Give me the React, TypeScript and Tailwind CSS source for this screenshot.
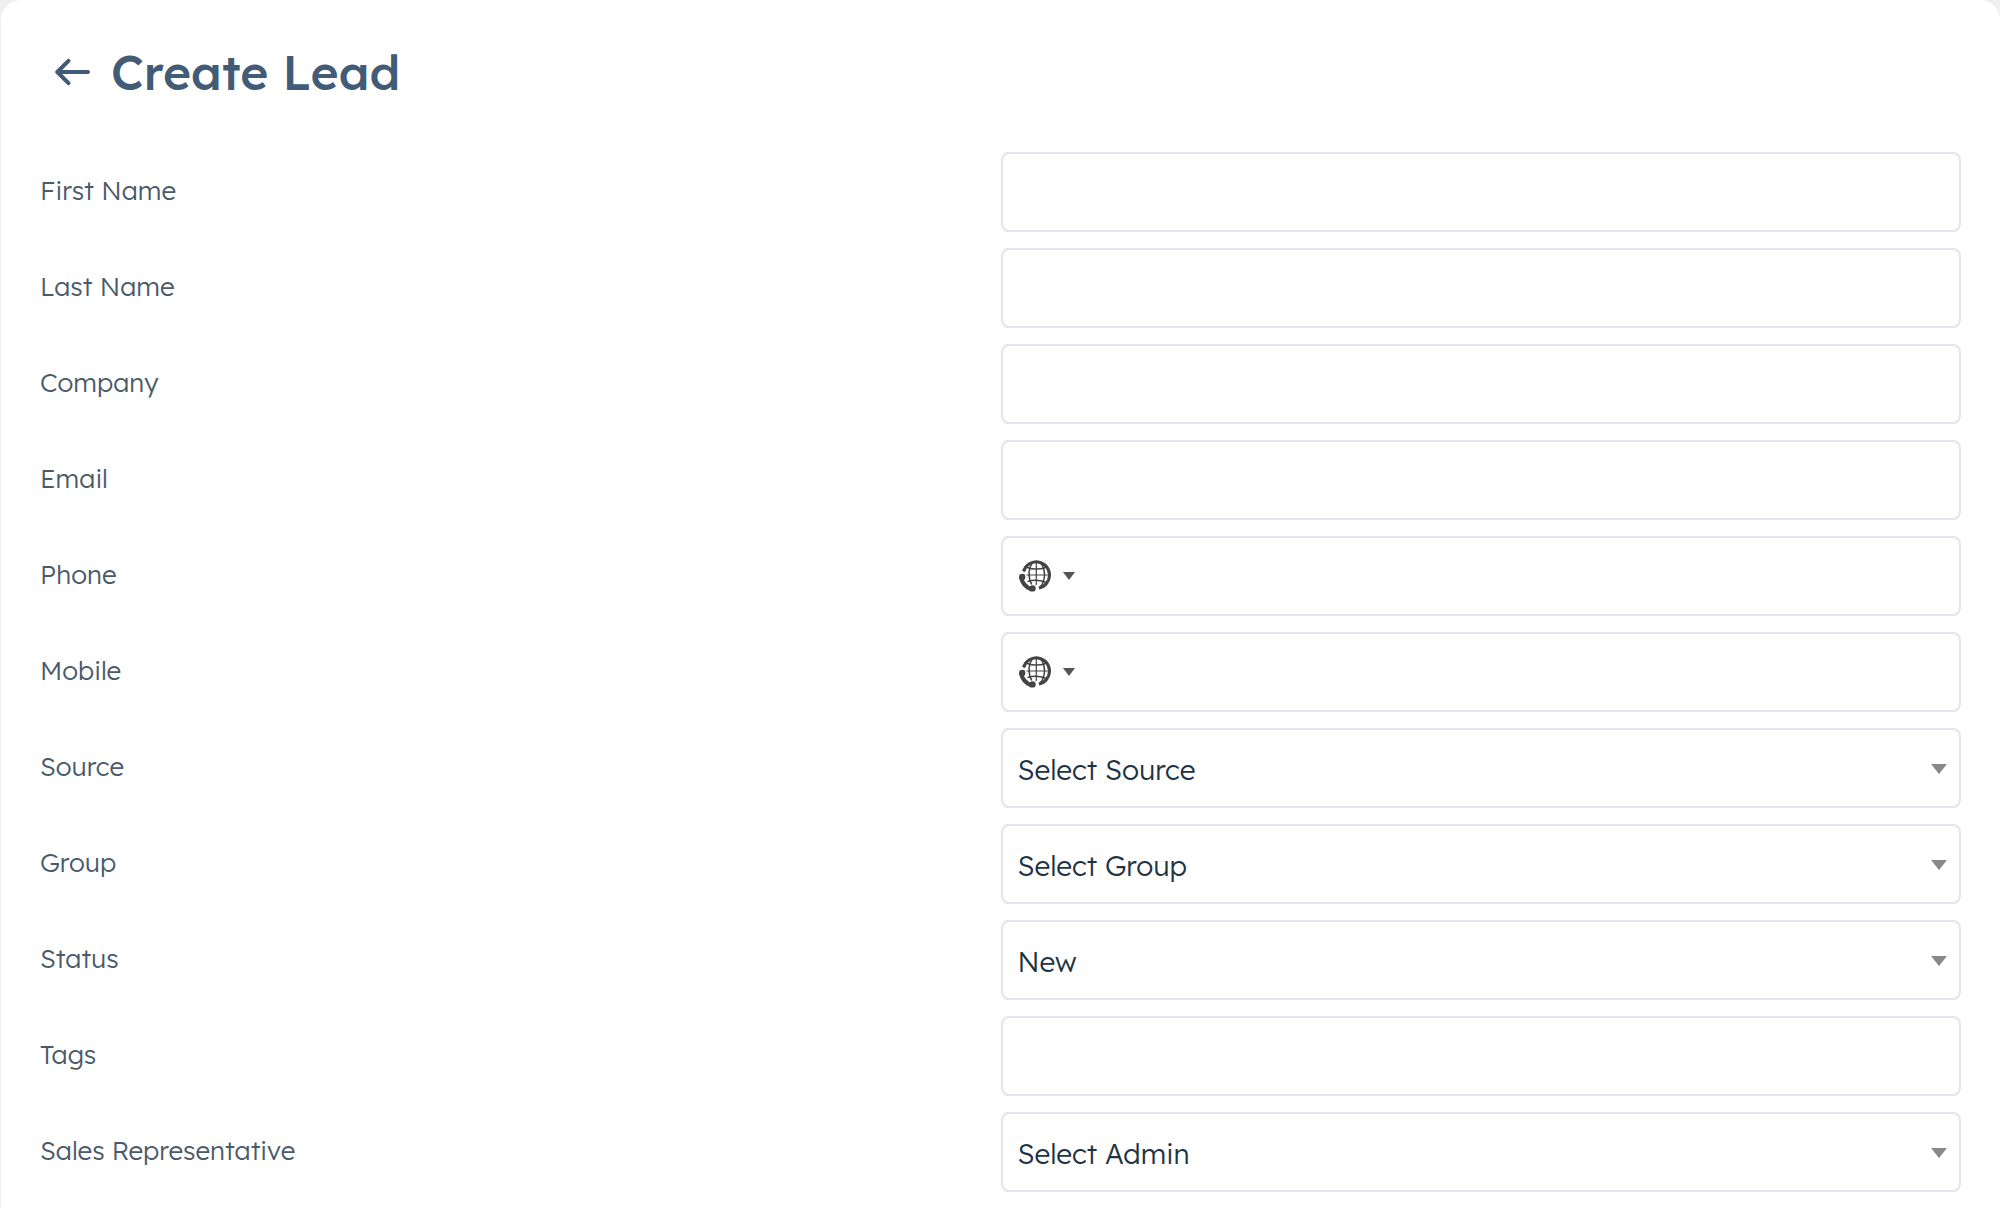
import type { ReactNode } from "react";

type FieldType = "text" | "email" | "phone" | "select";

interface Field {
  id: string;
  label: string;
  type: FieldType;
  options?: string[];
}

const fields: Field[] = [
  { id: "first-name", label: "First Name", type: "text" },
  { id: "last-name", label: "Last Name", type: "text" },
  { id: "company", label: "Company", type: "text" },
  { id: "email", label: "Email", type: "email" },
  { id: "phone", label: "Phone", type: "phone" },
  { id: "mobile", label: "Mobile", type: "phone" },
  { id: "source", label: "Source", type: "select", options: ["Select Source"] },
  { id: "group", label: "Group", type: "select", options: ["Select Group"] },
  { id: "status", label: "Status", type: "select", options: ["New"] },
  { id: "tags", label: "Tags", type: "text" },
  { id: "sales-rep", label: "Sales Representative", type: "select", options: ["Select Admin"] },
];

const boxClass = "h-20 w-full rounded-lg border-2 border-[#e1e5f1] bg-white text-[28px] text-[#213343]";

const BackArrow = () => (
  <svg width="36" height="28" viewBox="0 0 36 28" fill="none" stroke="currentColor" strokeWidth="4" strokeLinecap="round" strokeLinejoin="round" aria-hidden="true">
    <path d="M33 14H2.5M13.5 2.8L2.3 14l11.2 11.2" />
  </svg>
);

const GlobePhone = () => (
  <svg width="33" height="32" viewBox="0 0 33 32" fill="none" stroke="#444" aria-hidden="true">
    {/* outer ring, open where the handset sits */}
    <path d="M5.6 11.5A13.2 13.2 0 1 1 20.9 28" strokeWidth="3" />
    <path d="M18.3 1.5V25M8.5 15H31.5" strokeWidth="1.2" />
    <path d="M15 2C10 8.5 10 18 13.7 24.5M22 2C28 9 28 20.5 22 27.5" strokeWidth="1.5" />
    <path d="M8.5 7.2Q18.3 11 28.2 7.2M9.5 21.5Q18.5 18.5 28.3 22.5" strokeWidth="1.5" />
    {/* handset */}
    <path d="M3 17.5C4 22.5 8 27.3 13.7 29.6" strokeWidth="4" />
    <circle cx="4.2" cy="17" r="3.2" fill="#444" stroke="none" />
    <circle cx="14.5" cy="28.4" r="3.2" fill="#444" stroke="none" />
  </svg>
);

const FormRow = ({ id, label, children }: { id: string; label: string; children: ReactNode }) => (
  <div className="grid grid-cols-2 items-center">
    <label htmlFor={id} className="pb-0.5 text-[26px] leading-8 font-light text-[#4a5a6a]">
      {label}
    </label>
    {children}
  </div>
);

const PhoneInput = ({ id, label }: { id: string; label: string }) => (
  <div className={`${boxClass} flex items-center`}>
    <button type="button" className="flex items-center gap-3 pl-[15px]" aria-label={`${label} country code`}>
      <GlobePhone />
      <svg width="12" height="8" viewBox="0 0 12 8" fill="#555" aria-hidden="true">
        <path d="M0 0h12L6 8z" />
      </svg>
    </button>
    <input id={id} type="tel" className="h-full min-w-0 flex-1 px-[15px] outline-none" />
  </div>
);

const SelectInput = ({ id, options }: { id: string; options: string[] }) => (
  <div className="relative">
    <select id={id} className={`${boxClass} appearance-none px-[15px] pt-1 font-light`}>
      {options.map((option) => (
        <option key={option}>{option}</option>
      ))}
    </select>
    <svg className="pointer-events-none absolute top-9 right-3.5" width="16" height="10" viewBox="0 0 16 10" fill="#888" aria-hidden="true">
      <path d="M0 0h16L8 10z" />
    </svg>
  </div>
);

const renderControl = ({ id, label, type, options }: Field) => {
  if (type === "phone") return <PhoneInput id={id} label={label} />;
  if (type === "select") return <SelectInput id={id} options={options ?? []} />;
  return <input id={id} type={type} className={`${boxClass} px-[15px]`} />;
};

const App = () => {
  return (
    <div className="min-h-screen bg-[#efefef] pl-px font-['Lexend','Inter',sans-serif]">
      <main className="min-h-screen rounded-t-[20px] bg-white px-[39px] pt-10 pb-4">
        <header className="flex h-16 items-center gap-5 pl-[15px] text-[#425b76]">
          <button type="button" aria-label="Go back">
            <BackArrow />
          </button>
          <h1 className="text-[48px] leading-16 font-medium">Create Lead</h1>
        </header>

        <form className="mt-12 flex flex-col gap-4">
          {fields.map((field) => (
            <FormRow key={field.id} id={field.id} label={field.label}>
              {renderControl(field)}
            </FormRow>
          ))}
        </form>
      </main>
    </div>
  );
};

export default App;
